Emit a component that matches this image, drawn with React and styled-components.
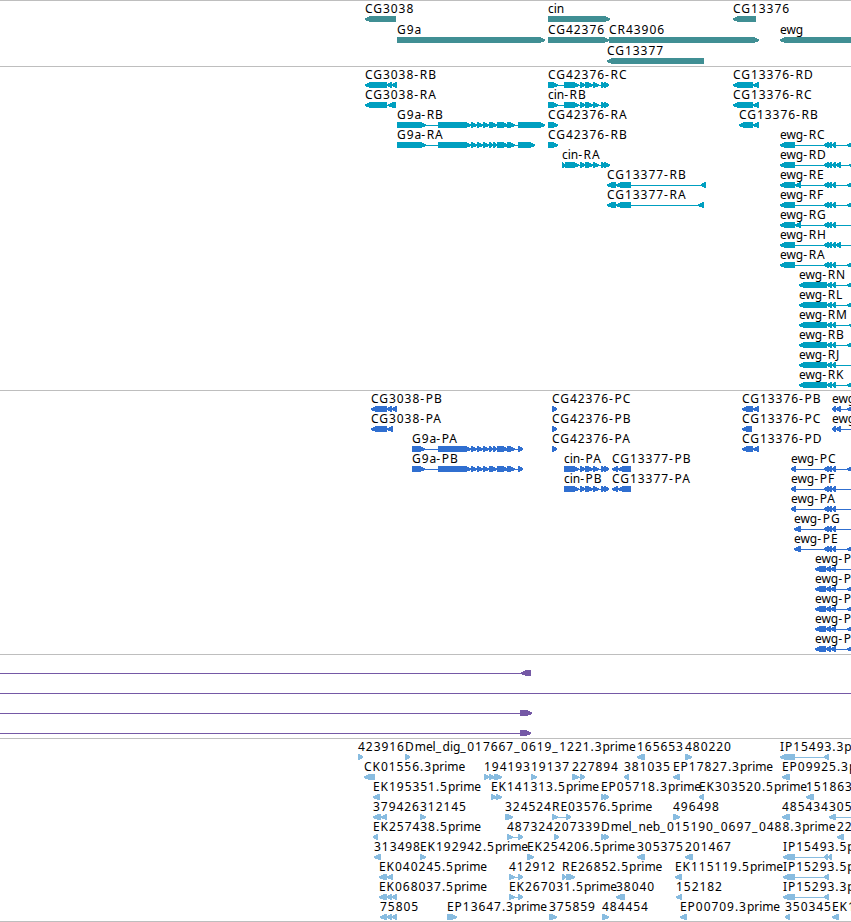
import React from "react"
import styled, { createGlobalStyle } from "styled-components"

const GlobalStyle = createGlobalStyle`
  body {
    margin: 0;
    background: #fff;
  }
`

const Browser = styled.main`
  width: 851px;
  height: 922px;
  overflow: hidden;
  box-sizing: border-box;
  border-bottom: 1px solid #bebebe;
  font-family: "Noto Sans", sans-serif;
  font-size: 12px;
  color: #000;
`

const Track = styled.section`
  border-top: 1px solid #bebebe;
  padding-bottom: ${({ gap }) => gap}px;
  color: ${({ color }) => color};
`

const Lane = styled.div`
  position: relative;
  height: ${({ size }) => size}px;
`

// features sit at their own coordinate on the sequence
const FeatureBox = styled.div`
  position: absolute;
  top: 0;
  left: ${({ start }) => start}px;
`

const Label = styled.span`
  display: block;
  height: 15px;
  line-height: 15px;
  color: #000;
  white-space: pre;
  letter-spacing: 0.95px;
`

const Part = styled.span`
  letter-spacing: ${({ dash }) => dash ? 1.6 : -0.05}px;
`

const Shape = styled.svg`
  display: block;
  overflow: visible;
  fill: currentColor;
  shape-rendering: crispEdges;
`

const TIP = 6

function exonPoints(from, to, direction) {
  const tip = Math.min(TIP, to - from)
  if (direction === "<") {
    return `${from},2.4 ${from + tip - 1},0 ${to},0 ${to},6 ${from + tip - 1},6 ${from},4`
  }
  return `${from},0 ${to - tip + 1},0 ${to},2.4 ${to},4 ${to - tip + 1},6 ${from},6`
}

function Feature({ name, direction, exons, lineFrom }) {
  const blocks = exons.split(" ").map(exon => exon.split("-").map(Number))
  const start = blocks[0][0]
  const end = blocks[blocks.length - 1][1]
  const left = lineFrom === undefined ? start : lineFrom

  return (
    <FeatureBox start={left}>
      <Label>
        {name.split(/([a-z]+|[-_])/).map((part, index) => (
          index % 2 ? <Part key={index} dash={/[-_]/.test(part) ? 1 : 0}>{part}</Part> : part
        ))}
      </Label>
      <Shape width={end - left} height="6">
        {(blocks.length > 1 || left < start) && (
          <rect x="0" y="3" width={end - left - 2} height="1"/>
        )}
        {blocks.map(([from, to]) => (
          <polygon key={from} points={exonPoints(from - left, to - left, direction)}/>
        ))}
      </Shape>
    </FeatureBox>
  )
}

const g9aStart = "471-477 477-483 483-489"
const cinTail = "580-585 585-593 593-599 601-605 604-609"
const ewgMid = "824-829 828-832 832-836"

const tracks = [
  {
    id: "genes",
    color: "#408f94",
    size: 21,
    gap: 2,
    lanes: [
      [["CG3038", "<", "365-396"], ["cin", ">", "548-610"], ["CG13376", "<", "733-756"]],
      [["G9a", ">", "397-545"], ["CG42376", ">", "548-609"], ["CR43906", ">", "609-759"], ["ewg", "<", "780-870"]],
      [["CG13377", "<", "607-704"]],
    ],
  },
  {
    id: "transcripts",
    color: "#009fc0",
    size: 20,
    gap: 3,
    lanes: [
      [["CG3038-RB", "<", "365-387 387-392 392-397"], ["CG42376-RC", ">", `548-558 564-579 ${cinTail}`], ["CG13376-RD", "<", "733-753 753-759"]],
      [["CG3038-RA", "<", "365-387 388-396"], ["cin-RB", ">", `548-558 564-579 ${cinTail}`], ["CG13376-RC", "<", "733-753 753-759"]],
      [["G9a-RB", ">", `397-426 438-471 ${g9aStart} 489-497 497-508 507-515 518-545`], ["CG42376-RA", ">", "548-558"], ["CG13376-RB", "<", "739-753 753-759"]],
      [["G9a-RA", ">", `397-426 438-471 ${g9aStart} 489-493 493-497 497-508 507-515 518-535`], ["CG42376-RB", ">", "548-558"], ["ewg-RC", "<", `780-795 ${ewgMid} 847-853`]],
      [["cin-RA", ">", "562-565 565-579 580-585 585-593 593-599 601-605 604-610"], ["ewg-RD", "<", `780-795 ${ewgMid} 836-841 849-855`]],
      [["CG13377-RB", "<", "607-616 616-631 701-706"], ["ewg-RE", "<", `780-795 795-801 ${ewgMid} 847-853`]],
      [["CG13377-RA", "<", "607-616 616-631 698-704"], ["ewg-RF", "<", `780-795 ${ewgMid} 847-853`]],
      [["ewg-RG", "<", `780-795 795-801 ${ewgMid} 860-870`]],
      [["ewg-RH", "<", `780-795 ${ewgMid} 836-841 860-870`]],
      [["ewg-RA", "<", `780-795 ${ewgMid} 847-853`]],
      [["ewg-RN", "<", "799-827 827-832 832-836 847-853"]],
      [["ewg-RL", "<", "799-827 827-832 832-836 847-853"]],
      [["ewg-RM", "<", "799-827 827-832 832-836 849-855"]],
      [["ewg-RB", "<", "799-827 827-832 832-836 847-853"]],
      [["ewg-RJ", "<", "799-827 827-832 832-836 860-870"]],
      [["ewg-RK", "<", "799-827 827-832 832-836 847-853"]],
    ],
  },
  {
    id: "proteins",
    color: "#306fd0",
    size: 20,
    gap: 3,
    lanes: [
      [["CG3038-PB", "<", "371-387 387-392 392-397"], ["CG42376-PC", ">", "552-557"], ["CG13376-PB", "<", "742-753 753-759"], ["ewg", "<", "832-836 836-841 847-853"]],
      [["CG3038-PA", "<", "371-387 387-393"], ["CG42376-PB", ">", "552-557"], ["CG13376-PC", "<", "742-752"], ["ewg", "<", "832-836 836-841 860-870"]],
      [["G9a-PA", ">", `412-425 438-471 ${g9aStart} 489-493 493-497 497-508 507-515 518-523`], ["CG42376-PA", ">", "552-557"], ["CG13376-PD", "<", "742-753 753-759"]],
      [["G9a-PB", ">", `412-425 438-471 ${g9aStart} 489-497 497-508 507-515 518-523`], ["cin-PA", ">", `564-579 ${cinTail}`], ["CG13377-PB", "<", "612-618 618-631"], ["ewg-PC", "<", `791-796 ${ewgMid} 847-853`]],
      [["cin-PB", ">", `564-579 ${cinTail}`], ["CG13377-PA", "<", "612-618 618-631"], ["ewg-PF", "<", `791-796 ${ewgMid} 860-870`]],
      [["ewg-PA", "<", `791-796 ${ewgMid} 860-870`]],
      [["ewg-PG", "<", `794-801 ${ewgMid} 860-870`]],
      [["ewg-PE", "<", `794-801 ${ewgMid} 847-853`]],
      [["ewg-P", "<", "815-826 826-831 831-836 860-870"]],
      [["ewg-P", "<", "815-826 826-831 831-836 847-853"]],
      [["ewg-P", "<", "815-826 826-831 831-836 847-853"]],
      [["ewg-P", "<", "815-826 826-831 831-836 847-853"]],
      [["ewg-P", "<", "815-826 826-831 831-836 847-853"]],
    ],
  },
  {
    id: "spans",
    color: "#7559a6",
    size: 20,
    gap: 3,
    lanes: [
      [["", "<", "521-531", 0]],
      [["", "<", "860-870", 0]],
      [["", ">", "520-532", 0]],
      [["", ">", "520-531", 0]],
    ],
  },
  {
    id: "insertions",
    color: "#88bce0",
    size: 20,
    gap: 2,
    lanes: [
      [["423916", ">", "358-363"], ["Dmel_dig_017667_0619_1221.3prime", ">", "405-410"], ["165653", "<", "637-645"], ["480220", ">", "685-692"], ["IP15493.3p", "<", "780-795 824-829"]],
      [["CK01556.3prime", "<", "364-375"], ["194193", ">", "484-489 489-495 494-502"], ["19137", ">", "531-537"], ["227894", ">", "572-579 580-585"], ["381035", "<", "624-629"], ["EP17827.3prime", "<", "673-680"], ["EP09925.3p", "<", "782-790"]],
      [["EK195351.5prime", "<", "373-380"], ["EK141313.5prime", ">", "491-497 496-502"], ["EP05718.3prime", ">", "601-605 604-609"], ["EK303520.5prime", "<", "699-704"], ["151863", "<", "806-814"]],
      [["379426", "<", "373-381 381-387"], ["312145", ">", "420-426"], ["324524", ">", "505-513"], ["RE03576.5prime", ">", "552-558 566-571"], ["496498", ">", "673-680"], ["485434", "<", "782-790"], ["305", "<", "829-836 860-870"]],
      [["EK257438.5prime", "<", "373-378"], ["487324", ">", "507-513 518-523"], ["207339", ">", "554-559"], ["Dmel_neb_015190_0697_0488.3prime", ">", "601-605 604-609"], ["22", "<", "837-844"]],
      [["313498", "<", "374-381"], ["EK192942.5prime", ">", "420-426"], ["EK254206.5prime", ">", "527-534"], ["305375", "<", "637-645"], ["201467", "<", "685-693"], ["IP15493.5p", "<", "783-795 824-828 828-832"]],
      [["EK040245.5prime", "<", "379-387 387-393"], ["412912", ">", "509-515 518-523"], ["RE26852.5prime", ">", "562-566 566-575"], ["EK115119.5prime", "<", "675-682"], ["IP15293.5p", "<", "783-795 824-829"]],
      [["EK068037.5prime", "<", "379-387 387-392 392-397"], ["EK267031.5prime", ">", "509-515 518-523"], ["38040", "<", "616-625"], ["152182", "<", "676-682"], ["IP15293.3p", "<", "783-795 824-829"]],
      [["75805", "<", "380-387 387-392 392-397"], ["EP13647.3prime", ">", "447-457"], ["375859", ">", "549-557"], ["484454", ">", "602-609"], ["EP00709.3prime", "<", "680-687"], ["350345", "<", "785-790"], ["EK1", "<", "832-839"]],
    ],
  },
]

function App() {
  return (
    <>
      <GlobalStyle/>
      <Browser>
        {tracks.map(({ id, color, size, gap, lanes }) => (
          <Track key={id} color={color} gap={gap}>
            {lanes.map((lane, index) => (
              <Lane key={index} size={size}>
                {lane.map(([name, direction, exons, lineFrom]) => (
                  <Feature
                    key={name + exons}
                    name={name}
                    direction={direction}
                    exons={exons}
                    lineFrom={lineFrom}
                  />
                ))}
              </Lane>
            ))}
          </Track>
        ))}
      </Browser>
    </>
  )
}

export default App
